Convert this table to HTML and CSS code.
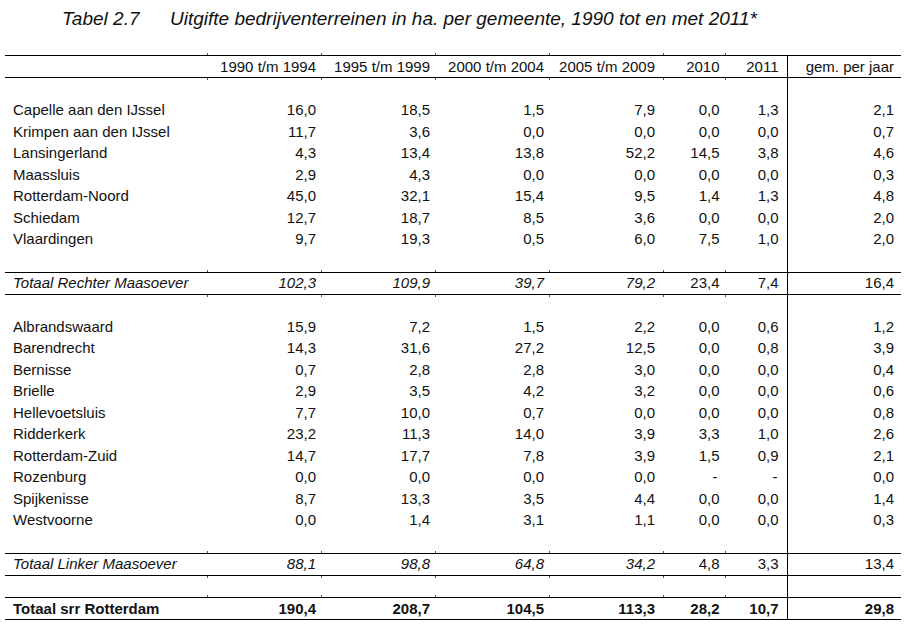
FILE: index.html
```html
<!DOCTYPE html>
<html lang="nl">
<head>
<meta charset="utf-8">
<title>Tabel 2.7</title>
<link rel="stylesheet" href="styles.css">
</head>
<body>
<h1 class="title"><span class="num">Tabel 2.7</span><span class="txt">Uitgifte bedrijventerreinen in ha. per gemeente, 1990 tot en met 2011*</span></h1>
<table class="tbl">
  <colgroup>
    <col class="c-name"><col class="c-p"><col class="c-p"><col class="c-p"><col class="c-p"><col class="c-y"><col class="c-y"><col class="c-p">
  </colgroup>
  <thead>
    <tr class="ruled">
      <th></th><th>1990 t/m 1994</th><th>1995 t/m 1999</th><th>2000 t/m 2004</th><th class="p9">2005 t/m 2009</th><th>2010</th><th class="p8">2011</th><th class="gem">gem. per jaar</th>
    </tr>
  </thead>
  <tbody>
    <tr class="sp"><td></td><td></td><td></td><td></td><td></td><td></td><td></td><td class="gem"></td></tr>
    <tr><td>Capelle aan den IJssel</td><td>16,0</td><td>18,5</td><td>1,5</td><td class="p9">7,9</td><td>0,0</td><td class="p8">1,3</td><td class="gem">2,1</td></tr>
    <tr><td>Krimpen aan den IJssel</td><td>11,7</td><td>3,6</td><td>0,0</td><td class="p9">0,0</td><td>0,0</td><td class="p8">0,0</td><td class="gem">0,7</td></tr>
    <tr><td>Lansingerland</td><td>4,3</td><td>13,4</td><td>13,8</td><td class="p9">52,2</td><td>14,5</td><td class="p8">3,8</td><td class="gem">4,6</td></tr>
    <tr><td>Maassluis</td><td>2,9</td><td>4,3</td><td>0,0</td><td class="p9">0,0</td><td>0,0</td><td class="p8">0,0</td><td class="gem">0,3</td></tr>
    <tr><td>Rotterdam-Noord</td><td>45,0</td><td>32,1</td><td>15,4</td><td class="p9">9,5</td><td>1,4</td><td class="p8">1,3</td><td class="gem">4,8</td></tr>
    <tr><td>Schiedam</td><td>12,7</td><td>18,7</td><td>8,5</td><td class="p9">3,6</td><td>0,0</td><td class="p8">0,0</td><td class="gem">2,0</td></tr>
    <tr><td>Vlaardingen</td><td>9,7</td><td>19,3</td><td>0,5</td><td class="p9">6,0</td><td>7,5</td><td class="p8">1,0</td><td class="gem">2,0</td></tr>
    <tr class="sp"><td></td><td></td><td></td><td></td><td></td><td></td><td></td><td class="gem"></td></tr>
    <tr class="ruled sub"><td>Totaal Rechter Maasoever</td><td class="it">102,3</td><td class="it">109,9</td><td class="it">39,7</td><td class="it p9">79,2</td><td>23,4</td><td class="p8">7,4</td><td class="gem">16,4</td></tr>
    <tr class="sp"><td></td><td></td><td></td><td></td><td></td><td></td><td></td><td class="gem"></td></tr>
    <tr><td>Albrandswaard</td><td>15,9</td><td>7,2</td><td>1,5</td><td class="p9">2,2</td><td>0,0</td><td class="p8">0,6</td><td class="gem">1,2</td></tr>
    <tr><td>Barendrecht</td><td>14,3</td><td>31,6</td><td>27,2</td><td class="p9">12,5</td><td>0,0</td><td class="p8">0,8</td><td class="gem">3,9</td></tr>
    <tr><td>Bernisse</td><td>0,7</td><td>2,8</td><td>2,8</td><td class="p9">3,0</td><td>0,0</td><td class="p8">0,0</td><td class="gem">0,4</td></tr>
    <tr><td>Brielle</td><td>2,9</td><td>3,5</td><td>4,2</td><td class="p9">3,2</td><td>0,0</td><td class="p8">0,0</td><td class="gem">0,6</td></tr>
    <tr><td>Hellevoetsluis</td><td>7,7</td><td>10,0</td><td>0,7</td><td class="p9">0,0</td><td>0,0</td><td class="p8">0,0</td><td class="gem">0,8</td></tr>
    <tr><td>Ridderkerk</td><td>23,2</td><td>11,3</td><td>14,0</td><td class="p9">3,9</td><td>3,3</td><td class="p8">1,0</td><td class="gem">2,6</td></tr>
    <tr><td>Rotterdam-Zuid</td><td>14,7</td><td>17,7</td><td>7,8</td><td class="p9">3,9</td><td>1,5</td><td class="p8">0,9</td><td class="gem">2,1</td></tr>
    <tr><td>Rozenburg</td><td>0,0</td><td>0,0</td><td>0,0</td><td class="p9">0,0</td><td class="dash">-</td><td class="p8 dash">-</td><td class="gem">0,0</td></tr>
    <tr><td>Spijkenisse</td><td>8,7</td><td>13,3</td><td>3,5</td><td class="p9">4,4</td><td>0,0</td><td class="p8">0,0</td><td class="gem">1,4</td></tr>
    <tr><td>Westvoorne</td><td>0,0</td><td>1,4</td><td>3,1</td><td class="p9">1,1</td><td>0,0</td><td class="p8">0,0</td><td class="gem">0,3</td></tr>
    <tr class="sp"><td></td><td></td><td></td><td></td><td></td><td></td><td></td><td class="gem"></td></tr>
    <tr class="ruled sub"><td>Totaal Linker Maasoever</td><td class="it">88,1</td><td class="it">98,8</td><td class="it">64,8</td><td class="it p9">34,2</td><td>4,8</td><td class="p8">3,3</td><td class="gem">13,4</td></tr>
    <tr class="sp2"><td></td><td></td><td></td><td></td><td></td><td></td><td></td><td class="gem"></td></tr>
    <tr class="ruled total"><td>Totaal srr Rotterdam</td><td>190,4</td><td>208,7</td><td>104,5</td><td class="p9">113,3</td><td>28,2</td><td class="p8">10,7</td><td class="gem">29,8</td></tr>
  </tbody>
</table>
</body>
</html>
```

FILE: styles.css
```css
html, body {
  margin: 0;
  padding: 0;
  background: #fff;
}

body {
  font-family: "Liberation Sans", Arial, sans-serif;
  color: #000;
}

.title {
  margin: 0;
  padding: 8px 0 0 62px;
  height: 47px;
  box-sizing: border-box;
  font-size: 19px;
  font-style: italic;
  font-weight: normal;
  line-height: 21px;
  color: #111;
}

.title .num {
  display: inline-block;
  width: 108px;
}

.tbl {
  margin-left: 5px;
  margin-top: 8px;
  border-collapse: collapse;
  table-layout: fixed;
  width: 895px;
  font-size: 15px;
  color: #111;
}

.c-name { width: 203px; }
.c-p { width: 114px; }
.c-y { width: 61.5px; }

.tbl th,
.tbl td {
  padding: 0 6px 0 0;
  height: 21.5px;
  text-align: right;
  font-weight: normal;
  white-space: nowrap;
  line-height: 16px;
  vertical-align: middle;
  position: relative;
}

.tbl th:first-child,
.tbl td:first-child {
  text-align: left;
  padding-left: 8px;
}

.tbl .p9 { padding-right: 9px; }
.tbl .p8 { padding-right: 8px; }
.tbl .gem { padding-right: 7px; border-left: 1px solid #000; }

.tbl .dash { padding-right: 8px; }
.tbl td.p8.dash { padding-right: 9px; }

.ruled th,
.ruled td {
  border-top: 1px solid #000;
  border-bottom: 1px solid #000;
  height: 21px;
}

.sub td:first-child,
.tbl .it {
  font-style: italic;
}

.total td {
  font-weight: bold;
}

.sp2 td {
  height: 21.5px;
}

/* small tick marks where column boundaries meet the rules */
.ruled th:not(:first-child)::before,
.ruled td:not(:first-child)::before,
.ruled th:not(:first-child)::after,
.ruled td:not(:first-child)::after {
  content: "";
  position: absolute;
  left: -1px;
  width: 1px;
  height: 2px;
  background: #555;
}

.ruled th:not(:first-child)::before,
.ruled td:not(:first-child)::before { top: -3px; }

.ruled th:not(:first-child)::after,
.ruled td:not(:first-child)::after { bottom: -3px; }

.ruled .gem::before,
.ruled .gem::after { display: none; }
```
